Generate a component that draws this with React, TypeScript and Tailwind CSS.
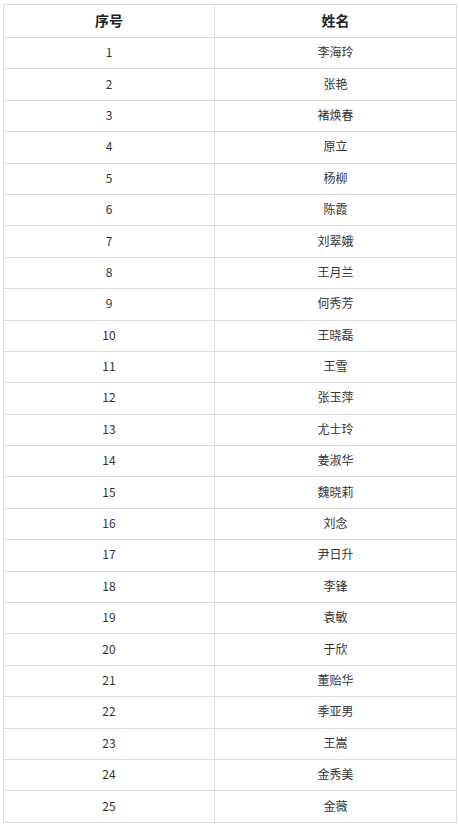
import React from 'react';

const names = [
  '李海玲', '张艳', '褚焕春', '原立', '杨柳', '陈霞', '刘翠娥', '王月兰', '何秀芳', '王晓磊',
  '王雪', '张玉萍', '尤士玲', '姜淑华', '魏晓莉', '刘念', '尹日升', '李锋', '袁敏', '于欣',
  '董贻华', '季亚男', '王嵩', '金秀美', '金薇',
];

const App: React.FC = () => {
  return (
    <div className="w-[459px] h-[826px] bg-white pt-[4px] pl-[3px]" style={{ fontFamily: '"Noto Sans CJK SC", "Noto Sans", sans-serif' }}>
      <table className="border-collapse w-[453px] table-fixed text-[12px] text-[#333]">
        <colgroup>
          <col className="w-[211px]" />
          <col className="w-[242px]" />
        </colgroup>
        <thead>
          <tr className="h-[33px]">
            <th className="border border-[#ddd] text-[14px] font-bold text-[#222] text-center p-0 pb-[2px]">序号</th>
            <th className="border border-[#ddd] text-[14px] font-bold text-[#222] text-center p-0 pb-[2px]">姓名</th>
          </tr>
        </thead>
        <tbody>
          {names.map((n, i) => (
            <tr key={i} className="h-[31.4px]">
              <td className="border border-[#ddd] text-center p-0 pb-[2px]">{i + 1}</td>
              <td className="border border-[#ddd] text-center p-0 pb-[2px]">{n}</td>
            </tr>
          ))}
        </tbody>
      </table>
    </div>
  );
};

export default App;
